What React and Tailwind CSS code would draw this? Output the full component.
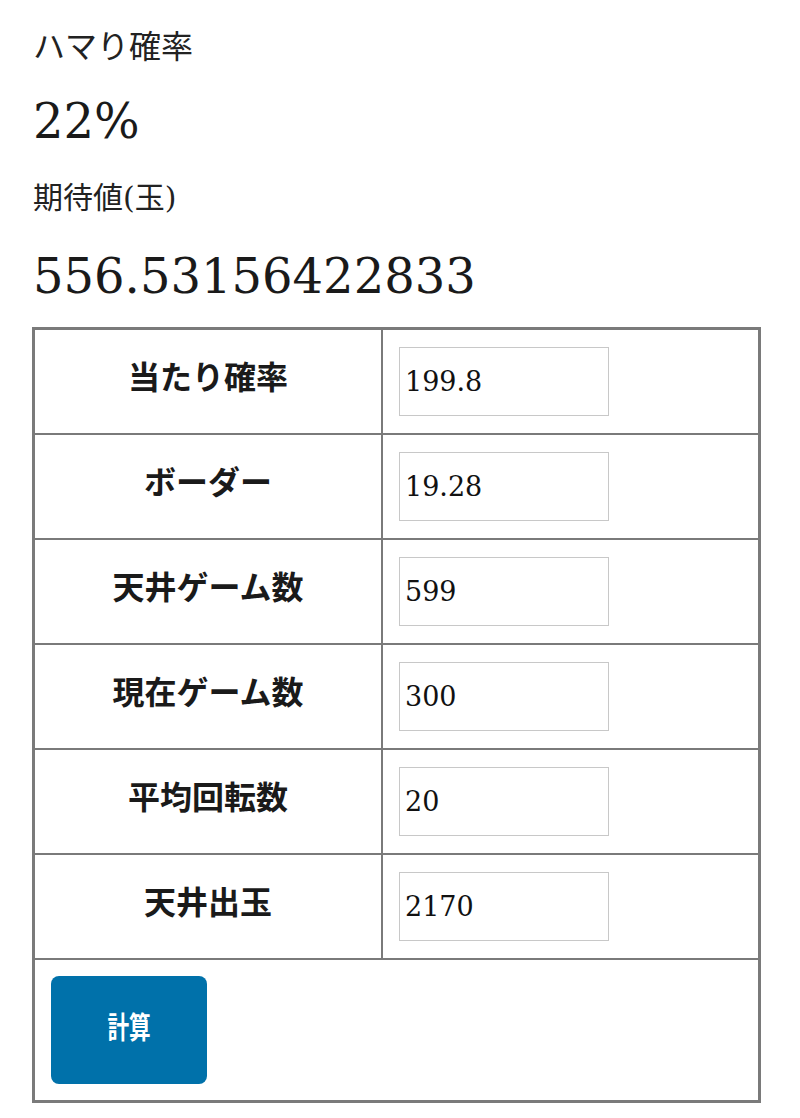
import React from 'react';

const rows = [
  { label: '当たり確率', value: '199.8' },
  { label: 'ボーダー', value: '19.28' },
  { label: '天井ゲーム数', value: '599' },
  { label: '現在ゲーム数', value: '300' },
  { label: '平均回転数', value: '20' },
  { label: '天井出玉', value: '2170' },
];

const serif = { fontFamily: '"DejaVu Serif", "Noto Sans CJK JP", serif' };

export default function App() {
  const [values, setValues] = React.useState(rows.map(r => r.value));

  return (
    <div className="bg-white min-h-[1118px] text-[#1a1a1a] font-['DejaVu_Serif','Noto_Sans_CJK_JP',serif]">
      <div className="pl-[33px] pt-[28px]">
        <p className="text-[32px] leading-[32px] font-['Noto_Sans_CJK_JP',sans-serif] text-[#222]">ハマり確率</p>
        <p className="mt-[37px] text-[48px] leading-[48px]">22%</p>
        <p className="mt-[37px] text-[30px] leading-[32px] text-[#222]">期待値(玉)</p>
        <p className="mt-[38px] text-[48px] leading-[48px]">556.53156422833</p>
      </div>

      {/* input table */}
      <div className="ml-[32px] mt-[27px] w-[729px] border-[3px] border-[#7a7a7a]">
        {rows.map((row, i) => (
          <div key={row.label} className="flex h-[105px] border-b-2 border-[#7a7a7a] last:h-[104px]">
            <div className="w-[348px] border-r-2 border-[#7a7a7a] flex items-center justify-center pb-[14px]">
              <span className="text-[32px] font-bold font-['Noto_Sans_CJK_JP',sans-serif] text-[#1a1a1a]">{row.label}</span>
            </div>
            <div className="flex-1 flex items-center pl-[16px]">
              <input
                type="text"
                value={values[i]}
                onChange={e => setValues(values.map((v, j) => (j === i ? e.target.value : v)))}
                style={serif}
                className="w-[210px] h-[69px] border border-[#c8c8c8] px-[5px] text-[27px] text-[#111] outline-none"
              />
            </div>
          </div>
        ))}
        <div className="p-[16px]">
          <button className="w-[156px] h-[108px] rounded-[8px] bg-[#0071aa] text-white flex items-center justify-center pb-[10px]">
            <span className="inline-block scale-x-[0.72] text-[30px] font-bold font-['Noto_Sans_CJK_JP',sans-serif]">計算</span>
          </button>
        </div>
      </div>
    </div>
  );
}
